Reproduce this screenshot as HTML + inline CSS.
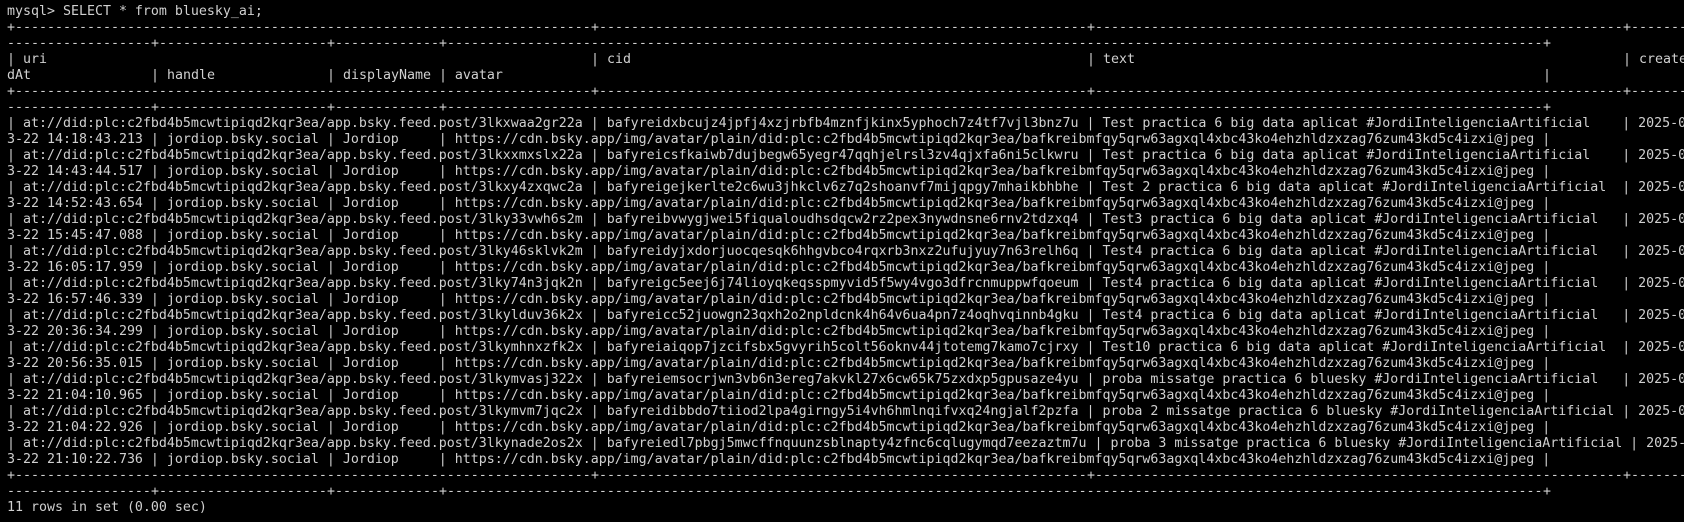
<!DOCTYPE html>
<html><head><meta charset="utf-8">
<style>
html,body{margin:0;padding:0;background:#000;}
body{width:1684px;height:522px;overflow:hidden;position:relative;}
#t{position:absolute;left:7px;top:4px;width:1690px;font-family:"DejaVu Sans Mono","Liberation Mono",monospace;font-size:13.29px;line-height:16px;color:#d0d0d0;}
.r{position:relative;height:16px;white-space:pre;overflow:visible;}
.r span{position:absolute;top:0;height:16px;overflow:hidden;}
</style></head><body><div id="t"><div class="r">mysql&gt; SELECT * from bluesky_ai;</div><div class="r"><span style="left:0">+</span><span style="left:8px;width:576px">----------------------------------------------------------------------------------------------------</span><span style="left:584px">+</span><span style="left:592px;width:488px">----------------------------------------------------------------------------------------------------</span><span style="left:1080px">+</span><span style="left:1088px;width:528px">----------------------------------------------------------------------------------------------------</span><span style="left:1616px">+</span><span style="left:1624px;width:80px">----------</span></div><div class="r"><span style="left:0;width:144px">----------------------------------------</span><span style="left:144px">+</span><span style="left:152px;width:168px">----------------------------------------</span><span style="left:320px">+</span><span style="left:328px;width:104px">--------------------</span><span style="left:432px">+</span><span style="left:440px;width:1096px">----------------------------------------------------------------------------------------------------------------------------------------------------------------</span><span style="left:1536px">+</span></div><div class="r"><span style="left:0">| uri</span><span style="left:584px">| cid</span><span style="left:1080px">| text</span><span style="left:1616px">| create</span></div><div class="r"><span style="left:0">dAt</span><span style="left:144px">| handle</span><span style="left:320px">| displayName | avatar</span><span style="left:1536px">|</span></div><div class="r"><span style="left:0">+</span><span style="left:8px;width:576px">----------------------------------------------------------------------------------------------------</span><span style="left:584px">+</span><span style="left:592px;width:488px">----------------------------------------------------------------------------------------------------</span><span style="left:1080px">+</span><span style="left:1088px;width:528px">----------------------------------------------------------------------------------------------------</span><span style="left:1616px">+</span><span style="left:1624px;width:80px">----------</span></div><div class="r"><span style="left:0;width:144px">----------------------------------------</span><span style="left:144px">+</span><span style="left:152px;width:168px">----------------------------------------</span><span style="left:320px">+</span><span style="left:328px;width:104px">--------------------</span><span style="left:432px">+</span><span style="left:440px;width:1096px">----------------------------------------------------------------------------------------------------------------------------------------------------------------</span><span style="left:1536px">+</span></div><div class="r">| at://did:plc:c2fbd4b5mcwtipiqd2kqr3ea/app.bsky.feed.post/3lkxwaa2gr22a | bafyreidxbcujz4jpfj4xzjrbfb4mznfjkinx5yphoch7z4tf7vjl3bnz7u | Test practica 6 big data aplicat #JordiInteligenciaArtificial    | 2025-0</div><div class="r">3-22 14:18:43.213 | jordiop.bsky.social | Jordiop     | https://cdn.bsky.app/img/avatar/plain/did:plc:c2fbd4b5mcwtipiqd2kqr3ea/bafkreibmfqy5qrw63agxql4xbc43ko4ehzhldzxzag76zum43kd5c4izxi@jpeg |</div><div class="r">| at://did:plc:c2fbd4b5mcwtipiqd2kqr3ea/app.bsky.feed.post/3lkxxmxslx22a | bafyreicsfkaiwb7dujbegw65yegr47qqhjelrsl3zv4qjxfa6ni5clkwru | Test practica 6 big data aplicat #JordiInteligenciaArtificial    | 2025-0</div><div class="r">3-22 14:43:44.517 | jordiop.bsky.social | Jordiop     | https://cdn.bsky.app/img/avatar/plain/did:plc:c2fbd4b5mcwtipiqd2kqr3ea/bafkreibmfqy5qrw63agxql4xbc43ko4ehzhldzxzag76zum43kd5c4izxi@jpeg |</div><div class="r">| at://did:plc:c2fbd4b5mcwtipiqd2kqr3ea/app.bsky.feed.post/3lkxy4zxqwc2a | bafyreigejkerlte2c6wu3jhkclv6z7q2shoanvf7mijqpgy7mhaikbhbhe | Test 2 practica 6 big data aplicat #JordiInteligenciaArtificial  | 2025-0</div><div class="r">3-22 14:52:43.654 | jordiop.bsky.social | Jordiop     | https://cdn.bsky.app/img/avatar/plain/did:plc:c2fbd4b5mcwtipiqd2kqr3ea/bafkreibmfqy5qrw63agxql4xbc43ko4ehzhldzxzag76zum43kd5c4izxi@jpeg |</div><div class="r">| at://did:plc:c2fbd4b5mcwtipiqd2kqr3ea/app.bsky.feed.post/3lky33vwh6s2m | bafyreibvwygjwei5fiqualoudhsdqcw2rz2pex3nywdnsne6rnv2tdzxq4 | Test3 practica 6 big data aplicat #JordiInteligenciaArtificial   | 2025-0</div><div class="r">3-22 15:45:47.088 | jordiop.bsky.social | Jordiop     | https://cdn.bsky.app/img/avatar/plain/did:plc:c2fbd4b5mcwtipiqd2kqr3ea/bafkreibmfqy5qrw63agxql4xbc43ko4ehzhldzxzag76zum43kd5c4izxi@jpeg |</div><div class="r">| at://did:plc:c2fbd4b5mcwtipiqd2kqr3ea/app.bsky.feed.post/3lky46sklvk2m | bafyreidyjxdorjuocqesqk6hhgvbco4rqxrb3nxz2ufujyuy7n63relh6q | Test4 practica 6 big data aplicat #JordiInteligenciaArtificial   | 2025-0</div><div class="r">3-22 16:05:17.959 | jordiop.bsky.social | Jordiop     | https://cdn.bsky.app/img/avatar/plain/did:plc:c2fbd4b5mcwtipiqd2kqr3ea/bafkreibmfqy5qrw63agxql4xbc43ko4ehzhldzxzag76zum43kd5c4izxi@jpeg |</div><div class="r">| at://did:plc:c2fbd4b5mcwtipiqd2kqr3ea/app.bsky.feed.post/3lky74n3jqk2n | bafyreigc5eej6j74lioyqkeqsspmyvid5f5wy4vgo3dfrcnmuppwfqoeum | Test4 practica 6 big data aplicat #JordiInteligenciaArtificial   | 2025-0</div><div class="r">3-22 16:57:46.339 | jordiop.bsky.social | Jordiop     | https://cdn.bsky.app/img/avatar/plain/did:plc:c2fbd4b5mcwtipiqd2kqr3ea/bafkreibmfqy5qrw63agxql4xbc43ko4ehzhldzxzag76zum43kd5c4izxi@jpeg |</div><div class="r">| at://did:plc:c2fbd4b5mcwtipiqd2kqr3ea/app.bsky.feed.post/3lkylduv36k2x | bafyreicc52juowgn23qxh2o2npldcnk4h64v6ua4pn7z4oqhvqinnb4gku | Test4 practica 6 big data aplicat #JordiInteligenciaArtificial   | 2025-0</div><div class="r">3-22 20:36:34.299 | jordiop.bsky.social | Jordiop     | https://cdn.bsky.app/img/avatar/plain/did:plc:c2fbd4b5mcwtipiqd2kqr3ea/bafkreibmfqy5qrw63agxql4xbc43ko4ehzhldzxzag76zum43kd5c4izxi@jpeg |</div><div class="r">| at://did:plc:c2fbd4b5mcwtipiqd2kqr3ea/app.bsky.feed.post/3lkymhnxzfk2x | bafyreiaiqop7jzcifsbx5gvyrih5colt56oknv44jtotemg7kamo7cjrxy | Test10 practica 6 big data aplicat #JordiInteligenciaArtificial  | 2025-0</div><div class="r">3-22 20:56:35.015 | jordiop.bsky.social | Jordiop     | https://cdn.bsky.app/img/avatar/plain/did:plc:c2fbd4b5mcwtipiqd2kqr3ea/bafkreibmfqy5qrw63agxql4xbc43ko4ehzhldzxzag76zum43kd5c4izxi@jpeg |</div><div class="r">| at://did:plc:c2fbd4b5mcwtipiqd2kqr3ea/app.bsky.feed.post/3lkymvasj322x | bafyreiemsocrjwn3vb6n3ereg7akvkl27x6cw65k75zxdxp5gpusaze4yu | proba missatge practica 6 bluesky #JordiInteligenciaArtificial   | 2025-0</div><div class="r">3-22 21:04:10.965 | jordiop.bsky.social | Jordiop     | https://cdn.bsky.app/img/avatar/plain/did:plc:c2fbd4b5mcwtipiqd2kqr3ea/bafkreibmfqy5qrw63agxql4xbc43ko4ehzhldzxzag76zum43kd5c4izxi@jpeg |</div><div class="r">| at://did:plc:c2fbd4b5mcwtipiqd2kqr3ea/app.bsky.feed.post/3lkymvm7jqc2x | bafyreidibbdo7tiiod2lpa4girngy5i4vh6hmlnqifvxq24ngjalf2pzfa | proba 2 missatge practica 6 bluesky #JordiInteligenciaArtificial | 2025-0</div><div class="r">3-22 21:04:22.926 | jordiop.bsky.social | Jordiop     | https://cdn.bsky.app/img/avatar/plain/did:plc:c2fbd4b5mcwtipiqd2kqr3ea/bafkreibmfqy5qrw63agxql4xbc43ko4ehzhldzxzag76zum43kd5c4izxi@jpeg |</div><div class="r">| at://did:plc:c2fbd4b5mcwtipiqd2kqr3ea/app.bsky.feed.post/3lkynade2os2x | bafyreiedl7pbgj5mwcffnquunzsblnapty4zfnc6cqlugymqd7eezaztm7u | proba 3 missatge practica 6 bluesky #JordiInteligenciaArtificial | 2025-0</div><div class="r">3-22 21:10:22.736 | jordiop.bsky.social | Jordiop     | https://cdn.bsky.app/img/avatar/plain/did:plc:c2fbd4b5mcwtipiqd2kqr3ea/bafkreibmfqy5qrw63agxql4xbc43ko4ehzhldzxzag76zum43kd5c4izxi@jpeg |</div><div class="r"><span style="left:0">+</span><span style="left:8px;width:576px">----------------------------------------------------------------------------------------------------</span><span style="left:584px">+</span><span style="left:592px;width:488px">----------------------------------------------------------------------------------------------------</span><span style="left:1080px">+</span><span style="left:1088px;width:528px">----------------------------------------------------------------------------------------------------</span><span style="left:1616px">+</span><span style="left:1624px;width:80px">----------</span></div><div class="r"><span style="left:0;width:144px">----------------------------------------</span><span style="left:144px">+</span><span style="left:152px;width:168px">----------------------------------------</span><span style="left:320px">+</span><span style="left:328px;width:104px">--------------------</span><span style="left:432px">+</span><span style="left:440px;width:1096px">----------------------------------------------------------------------------------------------------------------------------------------------------------------</span><span style="left:1536px">+</span></div><div class="r">11 rows in set (0.00 sec)</div></div></body></html>
